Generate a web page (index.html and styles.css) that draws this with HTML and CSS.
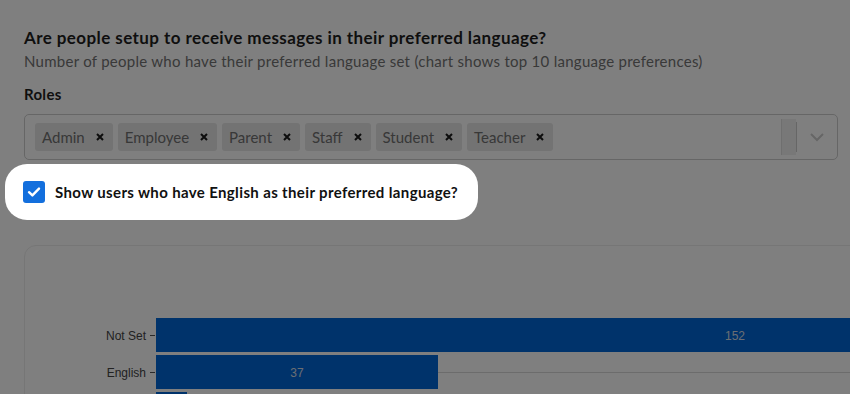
FILE: index.html
```html
<!DOCTYPE html>
<html>
<head>
	<meta charset="utf-8">
	<title>Language preferences</title>
	<link rel="stylesheet" href="styles.css">
</head>
<body>
	<div class="page">
		<h2 class="title">Are people setup to receive messages in their preferred language?</h2>
		<p class="subtitle">Number of people who have their preferred language set (chart shows top 10 language preferences)</p>

		<div class="field-label">Roles</div>
		<div class="select">
			<div class="values">
				<div class="tag"><span class="tag-text">Admin</span><span class="tag-x"><svg width="8" height="8" viewBox="0 0 8 8"><path d="M1 1L7 7M7 1L1 7"/></svg></span></div>
				<div class="tag"><span class="tag-text">Employee</span><span class="tag-x"><svg width="8" height="8" viewBox="0 0 8 8"><path d="M1 1L7 7M7 1L1 7"/></svg></span></div>
				<div class="tag"><span class="tag-text">Parent</span><span class="tag-x"><svg width="8" height="8" viewBox="0 0 8 8"><path d="M1 1L7 7M7 1L1 7"/></svg></span></div>
				<div class="tag"><span class="tag-text">Staff</span><span class="tag-x"><svg width="8" height="8" viewBox="0 0 8 8"><path d="M1 1L7 7M7 1L1 7"/></svg></span></div>
				<div class="tag"><span class="tag-text">Student</span><span class="tag-x"><svg width="8" height="8" viewBox="0 0 8 8"><path d="M1 1L7 7M7 1L1 7"/></svg></span></div>
				<div class="tag"><span class="tag-text">Teacher</span><span class="tag-x"><svg width="8" height="8" viewBox="0 0 8 8"><path d="M1 1L7 7M7 1L1 7"/></svg></span></div>
			</div>
			<div class="indicators">
				<span class="input-stub"></span>
				<span class="sep"></span>
				<span class="chevron"><svg width="16" height="10" viewBox="0 0 16 10"><path d="M2 2L8 8L14 2"/></svg></span>
			</div>
		</div>

		<label class="spotlight">
			<span class="check"><svg width="14" height="12" viewBox="0 0 14 12"><path d="M2 6.2L5.4 9.4L12 2.6"/></svg></span>
			<span class="check-text">Show users who have English as their preferred language?</span>
		</label>

		<div class="card">
			<svg class="chart" width="880" height="160" viewBox="0 0 880 160">
				<line class="grid" x1="131" y1="126.5" x2="880" y2="126.5"/>
				<rect class="bar" x="131" y="72" width="1158" height="34"/>
				<rect class="bar" x="131" y="109" width="282" height="34"/>
				<rect class="bar" x="131" y="146" width="31" height="34"/>
				<line class="tick" x1="125" y1="89.5" x2="130" y2="89.5"/>
				<line class="tick" x1="125" y1="126.5" x2="130" y2="126.5"/>
				<text class="axis" x="121" y="93.5">Not Set</text>
				<text class="axis" x="121" y="130.5">English</text>
				<text class="val" x="710" y="93.5">152</text>
				<text class="val" x="272" y="130.5">37</text>
			</svg>
		</div>
	</div>
</body>
</html>
```

FILE: styles.css
```css
html, body{
	margin: 0;
	height: 100%;
	overflow: hidden;
	background: #fff;
}
.page{
	padding: 27px 12px 0 24px;
	font-family: Lato, "Noto Sans", sans-serif;
	color: #202020;
}
.title{
	margin: 0;
	font-size: 17px;
	line-height: 22px;
	font-weight: 700;
	letter-spacing: 0.42px;
	color: #1e1e1e;
}
.subtitle{
	margin: 2px 0 0;
	font-size: 15px;
	line-height: 20px;
	letter-spacing: 0.27px;
	color: #727272;
}
.field-label{
	margin-top: 13px;
	font-size: 15px;
	line-height: 20px;
	font-weight: 700;
	letter-spacing: 0.3px;
	color: #1e1e1e;
}
.select{
	display: flex;
	align-items: center;
	margin-top: 10px;
	height: 44px;
	border: 1px solid #ccc;
	border-radius: 5px;
}
.values{
	flex: 1;
	display: flex;
	gap: 5px;
	padding: 0 10px;
}
.tag{
	display: flex;
	align-items: center;
	height: 28px;
	background: #e6e6e6;
	border-radius: 3px;
}
.tag-text{
	padding-left: 7px;
	font-size: 15px;
	color: #707070;
}
.tag-x{
	display: flex;
	padding: 0 9px 0 11px;
}
.tag-x svg path{
	stroke: #1a1a1a;
	stroke-width: 2;
	fill: none;
}
.indicators{
	display: flex;
	align-items: center;
	height: 100%;
}
.input-stub{
	width: 14px;
	height: 36px;
	background: #f0f0f0;
	border-left: 1px solid #dedede;
}
.sep{
	width: 1px;
	height: 30px;
	background: #ccc;
}
.chevron{
	display: flex;
	padding: 0 12px 0 12px;
}
.chevron path{
	stroke: #ccc;
	stroke-width: 2;
	fill: none;
}
.spotlight{
	position: relative;
	z-index: 10;
	display: inline-flex;
	align-items: center;
	gap: 10px;
	margin: 4px 0 0 -19px;
	padding: 17px 20px 17px 18px;
	background: #fff;
	border-radius: 22px;
	box-shadow: 0 0 0 3000px rgba(0,0,0,0.5);
}
.check{
	display: flex;
	align-items: center;
	justify-content: center;
	width: 22px;
	height: 22px;
	background: #136fdd;
	border-radius: 3px;
}
.check path{
	stroke: #fff;
	stroke-width: 2.4;
	fill: none;
	stroke-linecap: round;
	stroke-linejoin: round;
}
.check-text{
	font-size: 15px;
	font-weight: 700;
	letter-spacing: 0.36px;
	color: #111;
}
.card{
	margin: 25px -60px 0 0;
	height: 200px;
	border: 1px solid #ececec;
	border-radius: 12px;
	overflow: hidden;
}
.chart{
	display: block;
}
.chart .bar{
	fill: #0066d6;
}
.chart .grid{
	stroke: #d8d8d8;
	stroke-width: 1;
}
.chart .tick{
	stroke: #555;
	stroke-width: 1;
}
.chart text{
	font-family: "Liberation Sans", Arial, sans-serif;
	font-size: 12px;
}
.chart .axis{
	fill: #444;
	text-anchor: end;
}
.chart .val{
	fill: #d6dde6;
	text-anchor: middle;
}
```
